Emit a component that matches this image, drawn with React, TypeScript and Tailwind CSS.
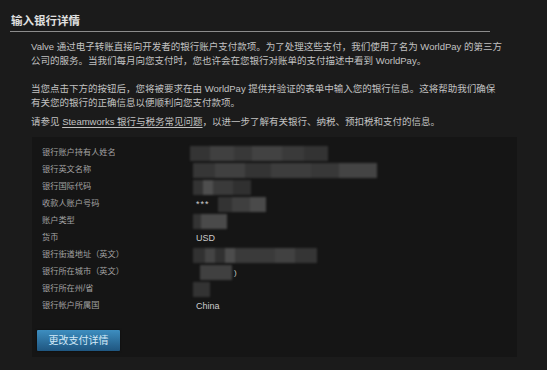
import React from 'react';

type Seg = [number, string];

// pixelated, blurred stand-in for the redacted account values
const Mosaic = ({ segs, offset = -4 }: { segs: Seg[]; offset?: number }) => (
  <div className="flex h-[15px] blur-[1.2px]" style={{ marginLeft: offset }}>
    {segs.map(([w, c], i) => (
      <div key={i} className="h-full" style={{ width: w, background: c }} />
    ))}
  </div>
);

const rows: { label: string; value: React.ReactNode }[] = [
  {
    label: '银行账户持有人姓名',
    value: <Mosaic offset={-6} segs={[[20, '#343434'], [24, '#404040'], [18, '#383838'], [30, '#424242'], [22, '#3a3a3a'], [24, '#333']]} />,
  },
  {
    label: '银行英文名称',
    value: <Mosaic offset={-3} segs={[[22, '#363636'], [30, '#404040'], [26, '#343434'], [40, '#3d3d3d'], [28, '#383838'], [38, '#444']]} />,
  },
  {
    label: '银行国际代码',
    value: <Mosaic offset={-3} segs={[[10, '#333'], [10, '#4e4e4e'], [20, '#3a3a3a'], [18, '#303030']]} />,
  },
  {
    label: '收款人账户号码',
    value: (
      <div className="flex items-center">
        <span className="mr-[8px] tracking-[1px]">***</span>
        <Mosaic offset={0} segs={[[14, '#333'], [18, '#3f3f3f'], [16, '#4a4a4a']]} />
      </div>
    ),
  },
  {
    label: '账户类型',
    value: <Mosaic offset={-3} segs={[[8, '#333'], [26, '#4a4a4a']]} />,
  },
  { label: '货币', value: 'USD' },
  {
    label: '银行街道地址（英文）',
    value: <Mosaic offset={-3} segs={[[12, '#313131'], [10, '#444'], [10, '#313131'], [10, '#4c4c4c'], [40, '#3a3a3a'], [20, '#414141'], [22, '#353535']]} />,
  },
  {
    label: '银行所在城市（英文）',
    value: (
      <div className="flex items-center">
        <Mosaic offset={4} segs={[[32, '#404040']]} />
        <span className="ml-[2px] text-[8px]">)</span>
      </div>
    ),
  },
  {
    label: '银行所在州/省',
    value: <Mosaic offset={-3} segs={[[17, '#333']]} />,
  },
  { label: '银行帐户所属国', value: 'China' },
];

export default function App() {
  return (
    <div className="w-[547px] h-[370px] overflow-hidden bg-[#1b1b1b] font-['Liberation_Sans','Noto_Sans_CJK_SC',sans-serif] text-[#c2c2c2]">
      <div className="ml-[10px] w-[480px] border-b border-[#8c8c8c] pt-[14px] pb-[3px]">
        <h2 className="pl-[1px] text-[11.5px] leading-[14px] font-bold text-[#e0e0e0]">输入银行详情</h2>
      </div>

      <div className="pl-[31px] pt-[8px] text-[9.5px] leading-[14px] whitespace-nowrap">
        <p>
          Valve 通过电子转账直接向开发者的银行账户支付款项。为了处理这些支付，我们使用了名为 WorldPay 的第三方
          <br />
          公司的服务。当我们每月向您支付时，您也许会在您银行对账单的支付描述中看到 WorldPay。
          <br />
          <br />
          当您点击下方的按钮后，您将被要求在由 WorldPay 提供并验证的表单中输入您的银行信息。这将帮助我们确保
          <br />
          有关您的银行的正确信息以便顺利向您支付款项。
        </p>
        <p className="mt-[5px]">
          请参见 <span className="underline underline-offset-2">Steamworks 银行与税务常见问题</span>，以进一步了解有关银行、纳税、预扣税和支付的信息。
        </p>
      </div>

      <div className="ml-[32px] mt-[8px] w-[485px] bg-[#151515] pt-[8px] pb-[6px]">
        <div className="pl-[10px]">
          {rows.map((r) => (
            <div key={r.label} className="flex h-[17px] items-center">
              <div className="w-[154px] text-[8.2px] text-[#a2a2a2]">{r.label}</div>
              <div className="text-[9px] text-[#cccccc]">{r.value}</div>
            </div>
          ))}
        </div>
        <div className="mt-[12px] pl-[5px]">
          <button className="h-[21px] w-[83px] rounded-[1px] bg-gradient-to-b from-[#3d8ec0] to-[#1f5680] text-[10px] text-[#d4eaf8] shadow-[0_0_2px_rgba(0,0,0,0.6)]">
            更改支付详情
          </button>
        </div>
      </div>
    </div>
  );
}
